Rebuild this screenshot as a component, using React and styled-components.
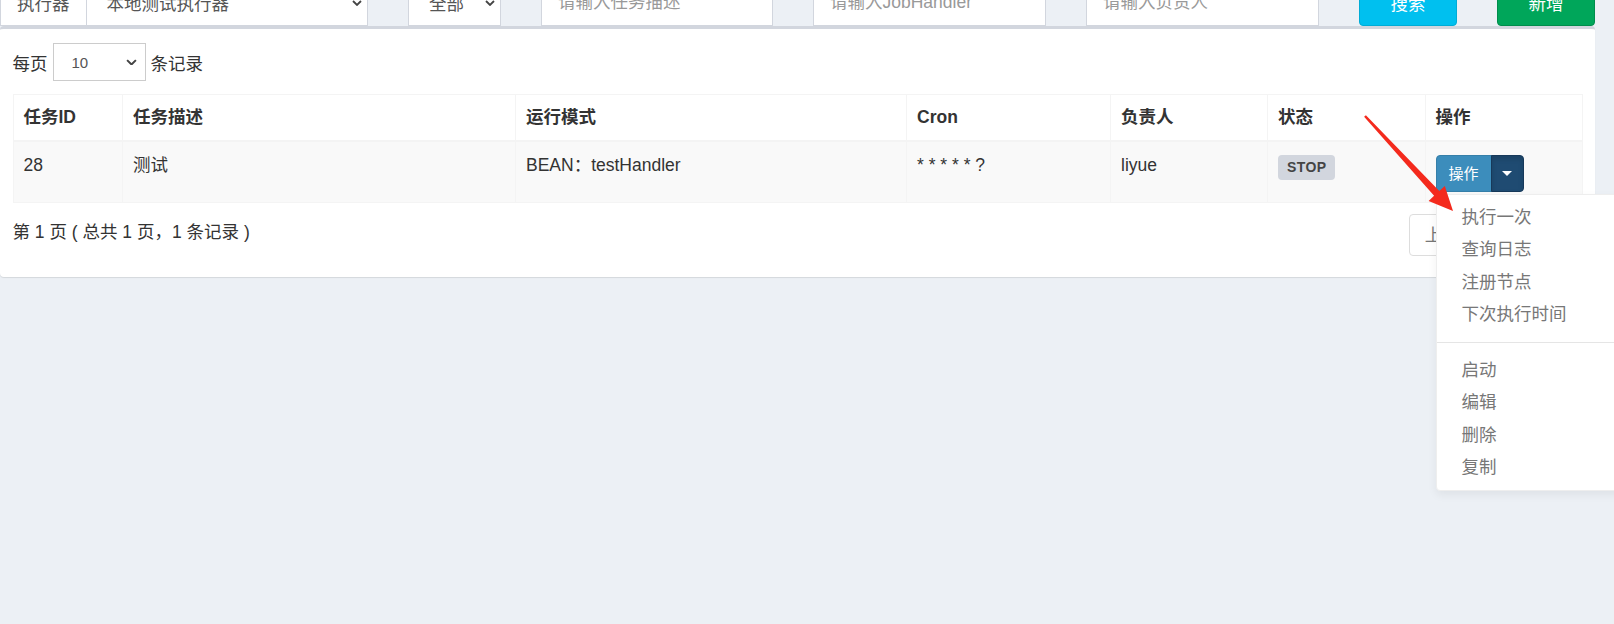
import React from "react";
import styled, { createGlobalStyle } from "styled-components";

const GlobalStyle = createGlobalStyle`
  html, body {
    margin: 0;
    padding: 0;
    background: #ecf0f5;
    overflow: hidden;
  }
  body {
    font-family: "Liberation Sans", "Noto Sans CJK SC", sans-serif;
    font-size: 17.5px;
    color: #333;
  }
  * {
    box-sizing: border-box;
  }
`;

const Root = styled.div`
  position: relative;
  display: flow-root;
  width: 1614px;
  height: 624px;
`;

// the page is scrolled a little, so the filter bar is cut at the top
const Page = styled.div`
  margin-top: -20px;
  padding-right: 19px;
`;

const FilterBar = styled.div`
  display: flex;
  justify-content: space-between;
  height: 45.5px;
`;

const InputGroup = styled.div`
  display: flex;
  width: ${(p) => p.$w}px;
`;

const Addon = styled.div`
  display: flex;
  align-items: center;
  padding: 0 16px;
  background: #fff;
  border: 1px solid #d2d6de;
  color: #555;
  white-space: nowrap;
`;

const SelectBox = styled.div`
  display: flex;
  align-items: center;
  justify-content: space-between;
  flex: ${(p) => (p.$w ? "none" : 1)};
  width: ${(p) => (p.$w ? `${p.$w}px` : "auto")};
  padding: 0 5px 0 20px;
  background: #fff;
  border: 1px solid #d2d6de;
  border-left-width: ${(p) => (p.$joined ? 0 : 1)}px;
  color: #555;
`;

const TextInput = styled.input`
  width: ${(p) => p.$w}px;
  height: 100%;
  padding: 0 16px;
  border: 1px solid #d2d6de;
  background: #fff;
  font: inherit;
  color: #555;
  outline: none;
  &::placeholder {
    color: #999;
  }
`;

const FilterButton = styled.button`
  width: ${(p) => p.$w}px;
  height: 100%;
  border: 1px solid ${(p) => (p.$variant === "success" ? "#008d4c" : "#00acd6")};
  background: ${(p) => (p.$variant === "success" ? "#00a65a" : "#00c0ef")};
  border-radius: 4px;
  color: #fff;
  font: inherit;
`;

const Box = styled.div`
  background: #fff;
  border-top: 3px solid #d2d6de;
  border-radius: 4px;
  box-shadow: 0 1px 1px rgba(0, 0, 0, 0.1);
  padding: 12.5px 12.5px 21px;
`;

const LengthRow = styled.div`
  display: flex;
  align-items: center;
  gap: 5px;
  height: 38px;
  margin: 2px 0 13px;
`;

const SmallSelect = styled.div`
  display: flex;
  align-items: center;
  justify-content: space-between;
  width: 93px;
  height: 38px;
  padding: 0 8px 0 18px;
  border: 1px solid #ccc;
  background: #fff;
  color: #555;
  font-size: 15px;
`;

const Table = styled.table`
  width: 100%;
  table-layout: fixed;
  border-collapse: collapse;
  border: 1px solid #f4f4f4;
`;

const Col = styled.col`
  width: ${(p) => p.$w}px;
`;

const Th = styled.th`
  padding: 10px;
  text-align: left;
  font-weight: bold;
  line-height: 25px;
  border: 1px solid #f4f4f4;
  border-bottom-width: 2px;
`;

const Row = styled.tr`
  background: ${(p) => (p.$striped ? "#f9f9f9" : "#fff")};
`;

const Td = styled.td`
  padding: 11px 10px 10px;
  line-height: 25px;
  vertical-align: top;
  border: 1px solid #f4f4f4;
  white-space: nowrap;
`;

const Badge = styled.span`
  display: inline-flex;
  align-items: center;
  height: 25px;
  margin-top: 2px;
  padding: 0 9px;
  background: #d2d6de;
  color: #444;
  border-radius: 4px;
  font-size: 14px;
  font-weight: bold;
  letter-spacing: 0.4px;
  vertical-align: top;
`;

const ActionGroup = styled.div`
  position: relative;
  display: inline-flex;
  margin-top: 2px;
  vertical-align: top;
`;

const MainBtn = styled.button`
  height: 37px;
  padding: 0 12px;
  background: #3c8dbc;
  border: 1px solid #367fa9;
  border-radius: 4px 0 0 4px;
  color: #fff;
  font: inherit;
  font-size: 15px;
`;

const CaretBtn = styled.button`
  display: flex;
  align-items: center;
  justify-content: center;
  width: 33px;
  height: 37px;
  margin-left: -1px;
  padding: 0;
  background: #1f4b72;
  border: 1px solid #17395a;
  border-radius: 0 4px 4px 0;
  box-shadow: inset 0 3px 5px rgba(0, 0, 0, 0.125);
`;

const Caret = styled.span`
  width: 0;
  height: 0;
  border-top: 5px solid #fff;
  border-left: 5px solid transparent;
  border-right: 5px solid transparent;
`;

const Menu = styled.ul`
  position: absolute;
  top: calc(100% + 2px);
  left: 0;
  z-index: 10;
  width: 200px;
  margin: 0;
  padding: 6px 0;
  list-style: none;
  background: #fff;
  border: 1px solid #eee;
  border-radius: 0 0 4px 4px;
  box-shadow: 0 4px 10px rgba(0, 0, 0, 0.06);
`;

const MenuItem = styled.li`
  padding: 3.75px 25px;
  line-height: 25px;
  color: #777;
  white-space: nowrap;
`;

const Divider = styled.li`
  height: 1px;
  margin: 11px 0;
  background: #e5e5e5;
`;

const InfoRow = styled.div`
  display: flex;
  justify-content: space-between;
  margin-top: 11px;
`;

const InfoText = styled.div`
  padding-top: 6px;
  line-height: 25px;
`;

const Pager = styled.ul`
  display: flex;
  margin: 0;
  padding: 0;
  list-style: none;
`;

const PageBtn = styled.li`
  padding: 7.5px 15px;
  line-height: 25px;
  margin-left: -1px;
  border: 1px solid #ddd;
  color: ${(p) => (p.$active ? "#fff" : "#777")};
  background: ${(p) => (p.$active ? "#337ab7" : "#fff")};
  &:first-child {
    border-radius: 4px 0 0 4px;
  }
  &:last-child {
    border-radius: 0 4px 4px 0;
  }
`;

const ArrowSvg = styled.svg`
  position: absolute;
  left: 1360px;
  top: 110px;
  z-index: 20;
  pointer-events: none;
`;

const Chevron = ({ size = 10 }) => (
  <svg width={size} height={size * 0.6} viewBox="0 0 10 6">
    <path d="M1 1l4 4 4-4" fill="none" stroke="#444" strokeWidth="1.8" />
  </svg>
);

const columns = [
  ["任务ID", 109.5],
  ["任务描述", 393],
  ["运行模式", 391],
  ["Cron", 204],
  ["负责人", 157],
  ["状态", 157.5],
  ["操作", 157.5],
];

const menuTop = ["执行一次", "查询日志", "注册节点", "下次执行时间"];
const menuBottom = ["启动", "编辑", "删除", "复制"];

export default function App() {
  return (
    <Root>
      <GlobalStyle />
      <Page>
        <FilterBar>
          <InputGroup $w={368}>
            <Addon>执行器</Addon>
            <SelectBox $joined>
              <span>本地测试执行器</span>
              <Chevron />
            </SelectBox>
          </InputGroup>
          <SelectBox $w={93}>
            <span>全部</span>
            <Chevron />
          </SelectBox>
          <TextInput $w={232} placeholder="请输入任务描述" />
          <TextInput $w={233} placeholder="请输入JobHandler" />
          <TextInput $w={233} placeholder="请输入负责人" />
          <FilterButton $w={98}>搜索</FilterButton>
          <FilterButton $w={98} $variant="success">
            新增
          </FilterButton>
        </FilterBar>

        <Box>
          <LengthRow>
            <span>每页</span>
            <SmallSelect>
              <span>10</span>
              <Chevron size={11} />
            </SmallSelect>
            <span>条记录</span>
          </LengthRow>

          <Table>
            <colgroup>
              {columns.map(([name, w]) => (
                <Col key={name} $w={w} />
              ))}
            </colgroup>
            <thead>
              <tr>
                {columns.map(([name]) => (
                  <Th key={name}>{name}</Th>
                ))}
              </tr>
            </thead>
            <tbody>
              <Row $striped>
                <Td>28</Td>
                <Td>测试</Td>
                <Td>BEAN：testHandler</Td>
                <Td>* * * * * ?</Td>
                <Td>liyue</Td>
                <Td>
                  <Badge>STOP</Badge>
                </Td>
                <Td>
                  <ActionGroup>
                    <MainBtn>操作</MainBtn>
                    <CaretBtn>
                      <Caret />
                    </CaretBtn>
                    <Menu>
                      {menuTop.map((t) => (
                        <MenuItem key={t}>{t}</MenuItem>
                      ))}
                      <Divider />
                      {menuBottom.map((t) => (
                        <MenuItem key={t}>{t}</MenuItem>
                      ))}
                    </Menu>
                  </ActionGroup>
                </Td>
              </Row>
            </tbody>
          </Table>

          <InfoRow>
            <InfoText>第 1 页 ( 总共 1 页，1 条记录 )</InfoText>
            <Pager>
              <PageBtn>上页</PageBtn>
              <PageBtn $active>1</PageBtn>
              <PageBtn>下页</PageBtn>
            </Pager>
          </InfoRow>
        </Box>
      </Page>

      <ArrowSvg width="100" height="110" viewBox="0 0 100 110">
        <polygon
          points="5.9,5.2 79.3,81 84.8,75.9 93,101 68.6,90.9 74.1,85.8 4.1,6.8"
          fill="#f42a1d"
        />
      </ArrowSvg>
    </Root>
  );
}
